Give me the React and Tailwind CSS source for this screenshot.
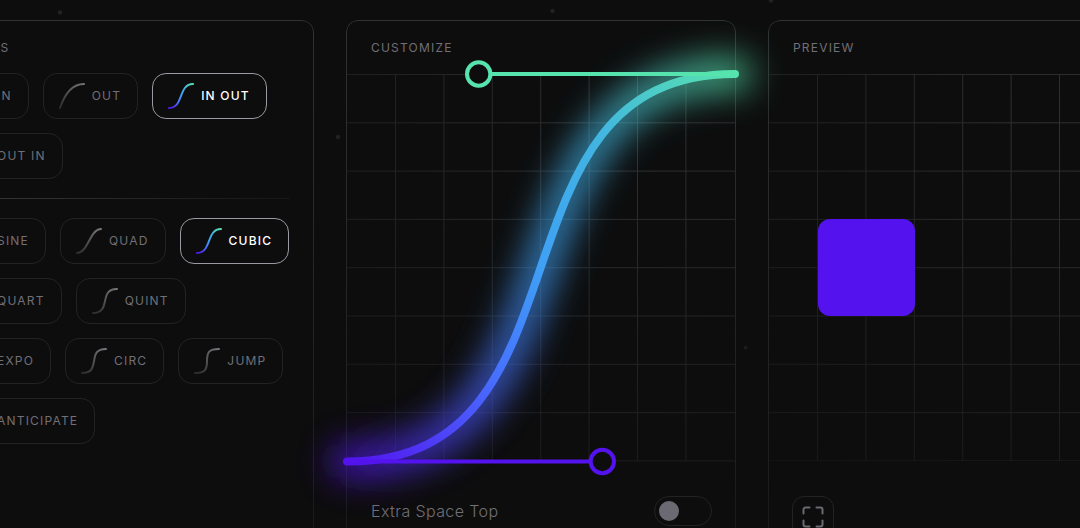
const variants = [
  { name: 'In', path: 'M1 25C11 25 20 16 25 1' },
  { name: 'Out', path: 'M1 25C6 10 14 1 25 1' },
  { name: 'In Out', path: 'M1 25C16 25 10 1 25 1', active: true },
  { name: 'Out In', path: 'M1 25C1 10 25 16 25 1' },
];

const curves = [
  { name: 'Sine', path: 'M1 25C10 25 16 1 25 1' },
  { name: 'Quad', path: 'M1 25C12 25 14 1 25 1' },
  { name: 'Cubic', path: 'M1 25C16 25 10 1 25 1', active: true },
  { name: 'Quart', path: 'M1 25C19 25 7 1 25 1' },
  { name: 'Quint', path: 'M1 25C20 25 6 1 25 1' },
  { name: 'Expo', path: 'M1 25C22 25 4 1 25 1' },
  { name: 'Circ', path: 'M1 25C12 25 12 18 13 13S14 1 25 1' },
  { name: 'Jump', path: 'M1 25C11 25 13 22 13 13S15 1 25 1' },
  { name: 'Anticipate', path: 'M1 20C12 32 14 -6 25 6' },
];

const EASING = 'M0 388.5C255 388.5 132 1 388 1';

const GridLines = ({ id }) => {
  const stops = [0, 1, 2, 3, 4, 5, 6, 7, 8];
  return (
    <>
      <defs>
        <radialGradient id={id} gradientUnits="userSpaceOnUse" cx="280" cy="60" r="420">
          <stop offset="0" stopColor="#313134" />
          <stop offset="0.5" stopColor="#232325" />
          <stop offset="1" stopColor="#171719" />
        </radialGradient>
      </defs>
      <g stroke={`url(#${id})`} strokeWidth="1">
        {stops.map((n) => (
          <path key={`h${n}`} d={`M0 ${n * 48.3 + 1.5}H388v0.01`} />
        ))}
        {stops.slice(1, 8).map((n) => (
          <path key={`v${n}`} d={`M${n * 48.4 + 0.1} 1V388h0.01`} />
        ))}
      </g>
    </>
  );
};

const Panel = ({ title, children }) => (
  <section className="relative">
    {/* border fades out towards the bottom */}
    <div className="pointer-events-none absolute inset-0 rounded-xl border border-[#323236] mask-b-from-0% mask-b-to-110%" />
    <h2 className="flex h-[53px] items-center px-[25px] pt-0.5 text-xs font-normal uppercase tracking-widest text-[#716f77]">
      {title}
    </h2>
    {children}
  </section>
);

const CurveButton = ({ name, path, active }) => (
  <button
    type="button"
    aria-pressed={Boolean(active)}
    className={
      active
        ? 'flex h-[46px] items-center gap-[7px] rounded-[14px] border border-[#9b99a3] pl-[15px] pr-4 text-xs font-medium uppercase tracking-widest text-white'
        : 'flex h-[46px] items-center gap-[7px] rounded-[14px] border border-[#232325] pl-[15px] pr-4 text-xs font-normal uppercase tracking-widest text-[#716f77]'
    }
  >
    <svg className="size-[26px] shrink-0" viewBox="0 0 26 26" fill="none" aria-hidden="true">
      <path d={path} stroke={active ? 'url(#curve-active)' : 'url(#curve-idle)'} strokeWidth="2" strokeLinecap="round" />
    </svg>
    {name}
  </button>
);

const App = () => {
  return (
    <main className="relative h-screen overflow-hidden bg-[#0d0d0d] font-['Inter',sans-serif]">
      {/* background particles and shared gradients */}
      <svg className="absolute left-0 top-0" width="1080" height="528" fill="#222224" aria-hidden="true">
        <defs>
          <linearGradient id="curve-active" gradientUnits="userSpaceOnUse" x1="1" y1="25" x2="25" y2="1">
            <stop offset="0" stopColor="#5312ee" />
            <stop offset="0.3" stopColor="#4770ff" />
            <stop offset="0.5" stopColor="#3fa0f5" />
            <stop offset="0.75" stopColor="#42b6e0" />
            <stop offset="1" stopColor="#57e3ad" />
          </linearGradient>
          <linearGradient id="curve-idle" gradientUnits="userSpaceOnUse" x1="1" y1="25" x2="25" y2="1">
            <stop offset="0" stopColor="#2c2c2e" />
            <stop offset="1" stopColor="#77757b" />
          </linearGradient>
        </defs>
        <circle cx="60" cy="12.5" r="2.2" />
        <circle cx="552.5" cy="11" r="2.2" />
        <circle cx="771" cy="0.5" r="2.2" />
        <circle cx="338" cy="137" r="2.2" />
        <circle cx="745.5" cy="347.5" r="2" fill="#1b1b1d" />
      </svg>

      <div className="relative -ml-19 grid min-h-[760px] grid-cols-[repeat(3,390px)] gap-8 pt-5">
        <Panel title="Easings">
          <div className="px-6">
            <div className="-mr-2 flex flex-wrap gap-3.5">
              {variants.map((item) => (
                <CurveButton key={item.name} {...item} />
              ))}
            </div>
            <div className="my-[19px] h-px bg-linear-to-r from-[#3a3a3e] to-[#161618]" />
            <div className="-mr-2 flex flex-wrap gap-3.5">
              {curves.map((item) => (
                <CurveButton key={item.name} {...item} />
              ))}
            </div>
          </div>
        </Panel>

        <Panel title="Customize">
          <div className="px-px">
            <svg className="relative z-10 block w-full overflow-visible" viewBox="0 0 388 388" fill="none" role="img" aria-label="Easing curve">
              <defs>
                <linearGradient id="curve" gradientUnits="userSpaceOnUse" x1="0" y1="388" x2="388" y2="0">
                  <stop offset="0" stopColor="#5312ee" />
                  <stop offset="0.3" stopColor="#4770ff" />
                  <stop offset="0.5" stopColor="#3fa0f5" />
                  <stop offset="0.75" stopColor="#42b6e0" />
                  <stop offset="1" stopColor="#57e3ad" />
                </linearGradient>
                <filter id="glow" filterUnits="userSpaceOnUse" x="-90" y="-90" width="568" height="568">
                  <feGaussianBlur stdDeviation="17" />
                </filter>
              </defs>
              <GridLines id="grid-customize" />
              <path d={EASING} stroke="url(#curve)" strokeWidth="34" strokeLinecap="round" opacity="0.75" filter="url(#glow)" />
              <path d={EASING} stroke="url(#curve)" strokeWidth="8" strokeLinecap="round" />
              <path d="M0 388.5H255" stroke="#5312ee" strokeWidth="4" strokeLinecap="round" />
              <path d="M388 1H132" stroke="#57e3ad" strokeWidth="4" strokeLinecap="round" />
              <circle cx="255.3" cy="388.5" r="11.7" fill="#0d0d0d" stroke="#5312ee" strokeWidth="4" />
              <circle cx="131.7" cy="1" r="11.7" fill="#0d0d0d" stroke="#57e3ad" strokeWidth="4" />
            </svg>
          </div>
          <div className="mt-[35px] flex items-center justify-between pl-[25px] pr-6">
            <label htmlFor="extra-space" className="text-base font-light tracking-wide text-[#716f77]">
              Extra Space Top
            </label>
            <input
              id="extra-space"
              type="checkbox"
              role="switch"
              className="flex h-[30px] w-[58px] appearance-none items-center rounded-full border border-[#232325] px-1 before:size-5 before:rounded-full before:bg-[#6b6971] checked:justify-end"
            />
          </div>
        </Panel>

        <Panel title="Preview">
          <div className="relative mx-px">
            <svg className="block w-full" viewBox="0 0 388 388" fill="none" aria-hidden="true">
              <GridLines id="grid-preview" />
            </svg>
            <div className="absolute left-1/8 top-3/8 size-1/4 rounded-xl bg-[#5312ee]" />
          </div>
          <div className="mt-[35px] px-6">
            <button type="button" aria-label="Fullscreen" className="flex size-[42px] items-center justify-center rounded-xl border border-[#232325] text-[#6b6971]">
              <svg className="size-[22px]" viewBox="0 0 22 22" fill="none" stroke="currentColor" strokeWidth="2" strokeLinecap="round" aria-hidden="true">
                <path d="M1.5 7.5V3.5a2 2 0 0 1 2-2H7.5M14.5 1.5h4a2 2 0 0 1 2 2V7.5M20.5 14.5v4a2 2 0 0 1-2 2H14.5M7.5 20.5H3.5a2 2 0 0 1-2-2V14.5" />
              </svg>
            </button>
          </div>
        </Panel>
      </div>
    </main>
  );
};

export default App;
